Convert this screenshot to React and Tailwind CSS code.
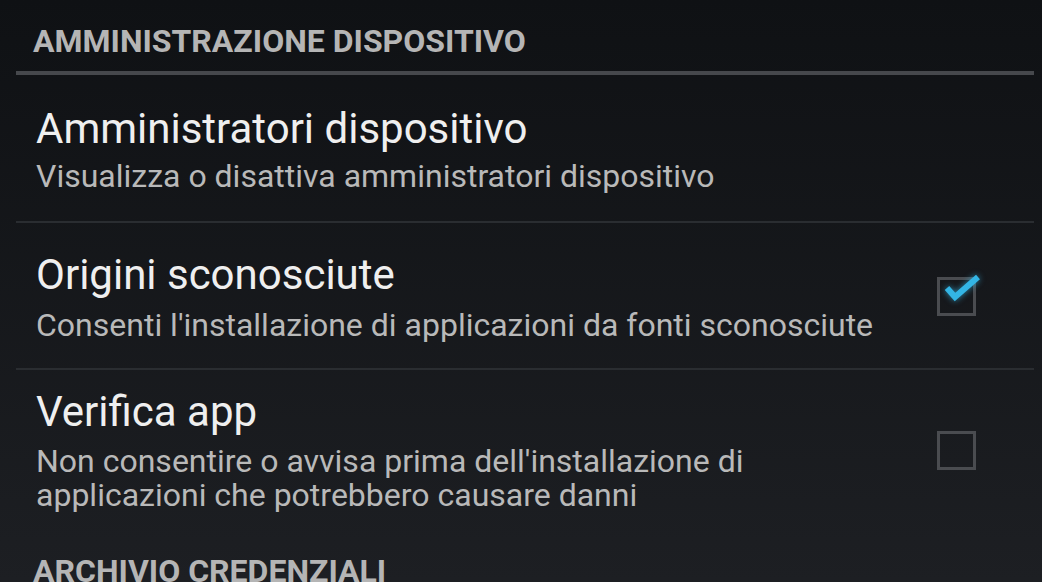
const rows = [
  {
    title: 'Amministratori dispositivo',
    summary: ['Visualizza o disattiva amministratori dispositivo'],
    pad: 'pt-[30px] pb-[28px]',
    gap: 'mt-[6px]',
  },
  {
    title: 'Origini sconosciute',
    summary: ["Consenti l'installazione di applicazioni da fonti sconosciute"],
    checkbox: true,
    checked: true,
    pad: 'pt-[28px] pb-[26px]',
    gap: 'mt-[9px]',
  },
  {
    title: 'Verifica app',
    summary: ["Non consentire o avvisa prima dell'installazione di", 'applicazioni che potrebbero causare danni'],
    checkbox: true,
    checked: false,
    pad: 'pt-[18px] pb-[20px]',
    gap: 'mt-[8px]',
  },
];

const CheckBox = ({ checked }) => (
  <div className="relative w-[39px] h-[39px] shrink-0">
    <div className="absolute inset-0 border-[3px] border-[#4a4c50]" />
    {checked && (
      <svg
        className="absolute -top-[4px] left-[6px] w-[40px] h-[34px] drop-shadow-[0_0_3px_rgba(51,181,229,0.7)]"
        viewBox="0 0 40 34"
        fill="none"
      >
        <path d="M4 15 L12 24 L35 4" stroke="#33b5e5" strokeWidth="6" strokeLinecap="butt" strokeLinejoin="miter" />
      </svg>
    )}
  </div>
);

const SectionHeader = ({ label }) => (
  <div className="px-[17px] text-[32px] leading-[36px] font-bold text-[#b5b5b5]">{label}</div>
);

export default function App() {
  return (
    <div
      className="w-[1042px] h-[582px] overflow-hidden bg-gradient-to-b from-[#0f1114] to-[#1d1f23]"
      style={{ fontFamily: 'Roboto, "Noto Sans", sans-serif' }}
    >
      <div className="ml-4 mr-2 pt-[23px]">
        <SectionHeader label="AMMINISTRAZIONE DISPOSITIVO" />
        <div className="mt-[12px] h-[4px] bg-[#46484c]" />

        {rows.map((row, i) => (
          <div key={row.title}>
            {i > 0 && <div className="h-[2px] bg-[#2a2d31]" />}
            <div className={`flex items-center pl-5 pr-[58px] ${row.pad}`}>
              <div className="flex-1">
                <div className="text-[42px] leading-[48px] text-[#efefef]">{row.title}</div>
                <div className={`${row.gap} text-[32px] leading-[34px] text-[#b9b9b9]`}>
                  {row.summary.map((line) => (
                    <div key={line}>{line}</div>
                  ))}
                </div>
              </div>
              {row.checkbox && <CheckBox checked={row.checked} />}
            </div>
          </div>
        ))}

        <div className="mt-[21px]">
          <SectionHeader label="ARCHIVIO CREDENZIALI" />
        </div>
      </div>
    </div>
  );
}
